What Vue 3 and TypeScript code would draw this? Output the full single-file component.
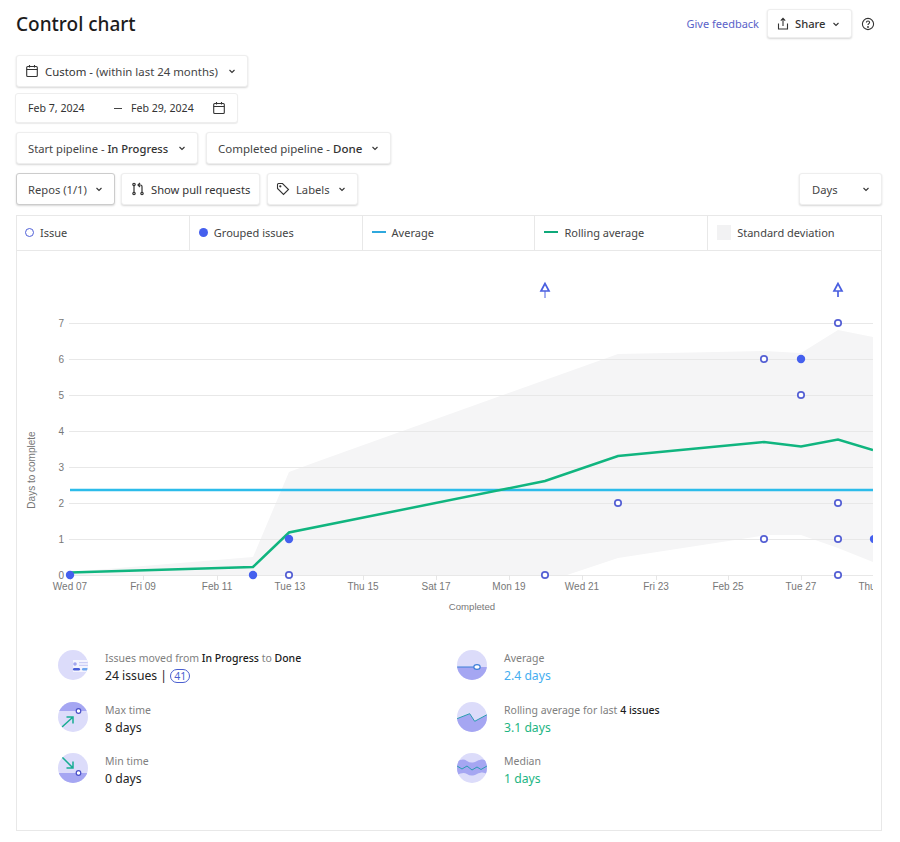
<script setup lang="ts">
const ticks = [
  { x: 70, label: "Wed 07" },
  { x: 143, label: "Fri 09" },
  { x: 217, label: "Feb 11" },
  { x: 290, label: "Tue 13" },
  { x: 363, label: "Thu 15" },
  { x: 436, label: "Sat 17" },
  { x: 509, label: "Mon 19" },
  { x: 582, label: "Wed 21" },
  { x: 656, label: "Fri 23" },
  { x: 728, label: "Feb 25" },
  { x: 801, label: "Tue 27" },
  { x: 874, label: "Thu 29" },
];

const gridY = [0, 1, 2, 3, 4, 5, 6, 7].map((v) => ({ v, y: 575 - v * 36 }));

const issues = [
  [289, 575],
  [545, 575],
  [618, 503],
  [764, 539],
  [764, 359],
  [801, 395],
  [838, 323],
  [838, 503],
  [838, 539],
  [838, 575],
];
const grouped = [
  [70, 575],
  [253, 575],
  [289, 539],
  [801, 359],
  [874, 539],
];

const rolling =
  "70,572.5 253,567 289,532.5 545,481 618,456 764,442 801,446.5 838,439.5 873,450";
const deviation =
  "70,572 253,557 289,472 316,462 618,354 764,351 801,353 838,330 873,337 873,562 838,548 801,535 767,535 618,558 567,575 253,575 70,575";
</script>

<template>
  <div class="page">
    <header class="top">
      <h1>Control chart</h1>
      <div class="top-actions">
        <a class="feedback">Give feedback</a>
        <button class="btn share">
          <svg class="ic" viewBox="0 0 14 14" fill="none" stroke="#333" stroke-width="1.1">
            <path d="M2.5 6.5v5.5h9V6.5M7 9V1.5M4.8 3.6 7 1.4l2.2 2.2" />
          </svg>
          <span class="txt">Share</span>
          <svg class="chev" viewBox="0 0 8 8"><path d="M1.5 3 4 5.5 6.5 3" /></svg>
        </button>
        <svg class="help" viewBox="0 0 14 14" fill="none" stroke="#333" stroke-width="1.1">
          <circle cx="7" cy="7" r="5.6" />
          <path d="M5.4 5.6C5.4 4.6 6.1 4 7 4s1.6.6 1.6 1.5C8.6 6.7 7 6.6 7 8" />
          <circle cx="7" cy="10" r=".4" />
        </svg>
      </div>
    </header>

    <div class="row r-custom">
      <button class="btn custom">
        <svg class="ic" viewBox="0 0 14 14" fill="none" stroke="#333" stroke-width="1.1">
          <rect x="1.7" y="2.5" width="10.6" height="10" rx="1" />
          <path d="M1.7 5.5h10.6M4.5 1v2.5M9.5 1v2.5" />
        </svg>
        <span class="txt"><span class="dark">Custom -</span> (within last 24 months)</span>
        <svg class="chev" viewBox="0 0 8 8"><path d="M1.5 3 4 5.5 6.5 3" /></svg>
      </button>
    </div>

    <div class="date">
      <span class="d1">Feb 7, 2024</span>
      <span class="dash"></span>
      <span class="d2">Feb 29, 2024</span>
      <svg class="ic" viewBox="0 0 14 14" fill="none" stroke="#333" stroke-width="1.1">
        <rect x="1.7" y="2.5" width="10.6" height="10" rx="1" />
        <path d="M1.7 5.5h10.6M4.5 1v2.5M9.5 1v2.5" />
      </svg>
    </div>

    <div class="row r-pipe">
      <button class="btn start">
        <span>Start pipeline - <b class="mid">In Progress</b></span>
        <svg class="chev" viewBox="0 0 8 8"><path d="M1.5 3 4 5.5 6.5 3" /></svg>
      </button>
      <button class="btn done">
        <span>Completed pipeline - <b class="mid">Done</b></span>
        <svg class="chev" viewBox="0 0 8 8"><path d="M1.5 3 4 5.5 6.5 3" /></svg>
      </button>
    </div>

    <div class="row r-filter">
      <button class="btn repos">
        <span>Repos (1/1)</span>
        <svg class="chev" viewBox="0 0 8 8"><path d="M1.5 3 4 5.5 6.5 3" /></svg>
      </button>
      <button class="btn prs">
        <svg class="ic" viewBox="0 0 14 14" fill="none" stroke="#333" stroke-width="1.2">
          <circle cx="3" cy="2.5" r="1.2" />
          <circle cx="3" cy="11.5" r="1.2" />
          <circle cx="11" cy="11.5" r="1.2" />
          <path d="M3 3.7v6.6M11 10.3V4.5A1.5 1.5 0 0 0 9.5 3H7.5M9 1 7 3l2 2" />
        </svg>
        <span class="txt dark">Show pull requests</span>
      </button>
      <button class="btn labels">
        <svg class="ic" viewBox="0 0 14 14" fill="none" stroke="#333" stroke-width="1.1">
          <path d="M1.5 2.5a1 1 0 0 1 1-1h4l6 6-5 5-6-6z" />
          <circle cx="4.3" cy="4.3" r=".6" />
        </svg>
        <span class="txt">Labels</span>
        <svg class="chev" viewBox="0 0 8 8"><path d="M1.5 3 4 5.5 6.5 3" /></svg>
      </button>
      <button class="btn days">
        <span>Days</span>
        <svg class="chev" viewBox="0 0 8 8"><path d="M1.5 3 4 5.5 6.5 3" /></svg>
      </button>
    </div>

    <section class="panel">
      <div class="legend">
        <div class="cell"><i class="lg-ring"></i>Issue</div>
        <div class="cell"><i class="lg-dot"></i>Grouped issues</div>
        <div class="cell"><i class="lg-line blue"></i>Average</div>
        <div class="cell"><i class="lg-line green"></i>Rolling average</div>
        <div class="cell"><i class="lg-box"></i>Standard deviation</div>
      </div>

      <svg class="chart" width="864" height="379" viewBox="17 251 864 379">
        <defs>
          <clipPath id="plot"><rect x="40" y="251" width="833" height="379" /></clipPath>
        </defs>
        <polygon :points="deviation" fill="#f5f5f6" />
        <line v-for="g in gridY" :key="g.v" x1="69" x2="873" :y1="g.y + 0.5" :y2="g.y + 0.5" stroke="#e8e8e8" />
        <text v-for="g in gridY" :key="'l' + g.v" x="64" :y="g.y + 3.5" text-anchor="end" class="axis">{{ g.v }}</text>
        <g clip-path="url(#plot)">
          <line v-for="t in ticks" :key="t.x" :x1="t.x + 0.5" :x2="t.x + 0.5" y1="575" y2="580" stroke="#e6e6e6" />
          <text v-for="t in ticks" :key="'t' + t.x" :x="t.x" y="589.5" text-anchor="middle" class="axis">{{ t.label }}</text>
          <line x1="70" x2="873" y1="490" y2="490" stroke="#2cbcea" stroke-width="2.4" />
          <polyline :points="rolling" fill="none" stroke="#10b57f" stroke-width="2.5" />
          <circle v-for="p in grouped" :key="'g' + p[0] + p[1]" :cx="p[0]" :cy="p[1]" r="4.2" fill="#4560ee" />
          <circle v-for="p in issues" :key="'i' + p[0] + p[1]" :cx="p[0]" :cy="p[1]" r="3.2" fill="#fff" stroke="#5560d4" stroke-width="1.7" />
        </g>
        <g fill="#fff" stroke="#4a5fe0" stroke-width="1.7">
          <path d="M545 283.5 541 291h8z" />
          <path d="M545 291v7" stroke-width="1" />
          <path d="M838 283.5 834 291h8z" />
          <path d="M838 291v6" />
        </g>
        <text x="35" y="470" transform="rotate(-90 35 470)" text-anchor="middle" class="axis">Days to complete</text>
        <text x="472" y="609.5" text-anchor="middle" class="axis small">Completed</text>
      </svg>

      <div class="stats">
        <div class="stat">
          <svg class="stat-ic" viewBox="0 0 30 30">
            <clipPath id="d1"><circle cx="15" cy="15" r="15" /></clipPath>
            <g clip-path="url(#d1)">
              <rect width="30" height="30" fill="#dcdcfa" />
              <rect x="15" y="10" width="15" height="12" fill="#f4f4fe" />
              <circle cx="17" cy="14" r="1.8" fill="#a3a6ee" />
              <path d="M21 12.7h9M21 15.3h9" stroke="#c3c5f3" />
              <rect x="15" y="18" width="7" height="2.6" rx="1.3" fill="#4a5fd8" />
              <rect x="24" y="18" width="6" height="2.6" rx="1.3" fill="#6fa8ef" />
            </g>
          </svg>
          <div>
            <div class="lab">Issues moved from <b>In Progress</b> to <b>Done</b></div>
            <div class="val">24 issues | <span class="pill">41</span></div>
          </div>
        </div>
        <div class="stat">
          <svg class="stat-ic" viewBox="0 0 30 30">
            <clipPath id="d2"><circle cx="15" cy="15" r="15" /></clipPath>
            <g clip-path="url(#d2)">
              <rect width="30" height="30" fill="#dcdcfa" />
              <rect y="17" width="30" height="13" fill="#a5a6f2" />
              <path d="M0 17h17" stroke="#3f7fd8" stroke-width="1.2" />
              <ellipse cx="20" cy="17" rx="3.2" ry="2.4" fill="#fff" stroke="#3f7fd8" stroke-width="1.2" />
            </g>
          </svg>
          <div>
            <div class="lab">Average</div>
            <div class="val sky">2.4 days</div>
          </div>
        </div>
        <div class="stat">
          <svg class="stat-ic" viewBox="0 0 30 30">
            <clipPath id="d3"><circle cx="15" cy="15" r="15" /></clipPath>
            <g clip-path="url(#d3)">
              <rect width="30" height="30" fill="#dcdcfa" />
              <rect width="30" height="9" fill="#a5a6f2" />
              <circle cx="20.5" cy="9" r="2.3" fill="#fff" stroke="#4a50c8" stroke-width="1.2" />
              <path d="M4 25 15 15M8.5 15H15v6.5" fill="none" stroke="#17ad92" stroke-width="1.5" />
            </g>
          </svg>
          <div>
            <div class="lab">Max time</div>
            <div class="val">8 days</div>
          </div>
        </div>
        <div class="stat">
          <svg class="stat-ic" viewBox="0 0 30 30">
            <clipPath id="d4"><circle cx="15" cy="15" r="15" /></clipPath>
            <g clip-path="url(#d4)">
              <rect width="30" height="30" fill="#dcdcfa" />
              <path d="M0 16.7 12.7 11.7 17.7 19.3 30 12.7V30H0z" fill="#a5a6f2" />
              <path d="M0 16.7 12.7 11.7 17.7 19.3 30 12.7" fill="none" stroke="#2a9db0" stroke-width="1" />
            </g>
          </svg>
          <div>
            <div class="lab">Rolling average for last <b>4 issues</b></div>
            <div class="val green">3.1 days</div>
          </div>
        </div>
        <div class="stat">
          <svg class="stat-ic" viewBox="0 0 30 30">
            <clipPath id="d5"><circle cx="15" cy="15" r="15" /></clipPath>
            <g clip-path="url(#d5)">
              <rect width="30" height="30" fill="#dcdcfa" />
              <rect y="20" width="30" height="10" fill="#a5a6f2" />
              <circle cx="20.5" cy="20" r="2.3" fill="#fff" stroke="#4a50c8" stroke-width="1.2" />
              <path d="M4 4 15 15M8.5 15H15V8.5" fill="none" stroke="#17ad92" stroke-width="1.5" />
            </g>
          </svg>
          <div>
            <div class="lab">Min time</div>
            <div class="val">0 days</div>
          </div>
        </div>
        <div class="stat">
          <svg class="stat-ic" viewBox="0 0 30 30">
            <clipPath id="d6"><circle cx="15" cy="15" r="15" /></clipPath>
            <g clip-path="url(#d6)">
              <rect width="30" height="30" fill="#dcdcfa" />
              <path d="M0 9C4 6 7 6 10 8s6 2 10 0 7-2 10 0V21c-3-2-6-2-10 0s-7 2-10 0-6-1-10 1z" fill="#a5a6f2" />
              <path d="M0 13 5 16l5-3 5 4 5-3 4 2.5 6-3.5" fill="none" stroke="#2a9db0" stroke-width="1" />
            </g>
          </svg>
          <div>
            <div class="lab">Median</div>
            <div class="val green">1 days</div>
          </div>
        </div>
      </div>
    </section>
  </div>
</template>

<style>
html,
body {
  margin: 0;
  background: #fff;
}
</style>

<style scoped>
.page {
  width: 866px;
  padding: 0 18px 0 16px;
  font-family: "Noto Sans", "Open Sans", sans-serif;
  font-size: 11px;
  color: #444;
}
.top {
  display: flex;
  align-items: center;
  justify-content: space-between;
  height: 47px;
}
h1 {
  margin: 0;
  font-size: 19px;
  font-weight: 500;
  color: #1c1c1c;
}
.top-actions {
  display: flex;
  align-items: center;
  margin-right: 7px;
}
.feedback {
  color: #5a62c8;
  margin-right: 8px;
}
.btn {
  display: inline-flex;
  align-items: center;
  height: 32px;
  padding: 0 11px;
  box-sizing: border-box;
  background: #fff;
  border: 1px solid #eee;
  border-radius: 3px;
  box-shadow: 0 1px 2px rgba(0, 0, 0, 0.16);
  font: inherit;
  font-size: 11.2px;
  color: #444;
  white-space: nowrap;
}
.txt {
  margin-left: 6px;
}
.mid {
  font-weight: 500;
  color: #333;
}
.dark {
  color: #333;
}
.ic {
  width: 14px;
  height: 14px;
  flex: none;
}
.chev {
  width: 8px;
  height: 8px;
  flex: none;
  margin-left: auto;
  fill: none;
  stroke: #333;
  stroke-width: 1.1;
}
.share {
  width: 85px;
  height: 29px;
  padding-left: 8px;
  color: #333;
  font-weight: 500;
}
.share .txt {
  margin-left: 5px;
}
.help {
  width: 14px;
  height: 14px;
  margin-left: 9px;
}
.row {
  display: flex;
}
.r-custom {
  margin-top: 8px;
}
.custom {
  width: 232px;
  padding-left: 8px;
  font-size: 11.4px;
}
.date {
  display: flex;
  align-items: center;
  width: 223px;
  height: 30px;
  box-sizing: border-box;
  margin: 6px 0 0 -1px;
  padding: 0 11px 0 12px;
  background: #fff;
  border: 1px solid #eee;
  border-radius: 3px;
  box-shadow: 0 1px 1px rgba(0, 0, 0, 0.08);
  font-size: 10.6px;
  color: #333;
}
.d1 {
  width: 86px;
}
.dash {
  width: 8px;
  height: 1px;
  background: #444;
  margin-right: 9px;
}
.d2 {
  width: 81px;
}
.r-pipe {
  margin-top: 9px;
  gap: 8px;
}
.start {
  width: 182px;
}
.done {
  width: 185px;
  font-size: 11.5px;
}
.r-filter {
  margin-top: 9px;
}
.repos {
  width: 99px;
  border-color: #ccc;
  margin-right: 6px;
}
.prs {
  width: 139px;
  margin-right: 7px;
  padding-left: 9px;
}
.labels {
  width: 91px;
  padding-left: 8px;
}
.days {
  width: 83px;
  margin-left: auto;
  padding-left: 12px;
}
.panel {
  margin-top: 10px;
  width: 866px;
  height: 616px;
  box-sizing: border-box;
  border: 1px solid #e8e8e8;
}
.legend {
  display: grid;
  grid-template-columns: repeat(5, 1fr);
  height: 34px;
  border-bottom: 1px solid #e8e8e8;
}
.cell {
  display: flex;
  align-items: center;
  padding: 0 0 2px 8px;
  border-right: 1px solid #e8e8e8;
}
.cell:last-child {
  border-right: 0;
}
.lg-ring {
  width: 7px;
  height: 7px;
  border: 1px solid #5060d8;
  border-radius: 50%;
  margin-right: 6px;
}
.lg-dot {
  width: 9px;
  height: 9px;
  background: #4560ee;
  border-radius: 50%;
  margin: 0 6px 0 1px;
}
.lg-line {
  width: 14px;
  height: 2px;
  margin: 0 6px 0 1px;
}
.blue {
  background: #2fa8dd;
}
.green {
  background: #0fa97a;
}
.lg-box {
  width: 14px;
  height: 15px;
  background: #f2f2f3;
  margin: 0 6px 0 1px;
}
.chart {
  display: block;
}
.axis {
  font-family: "Liberation Sans", Arial, sans-serif;
  font-size: 10px;
  fill: #777;
}
.small {
  font-size: 9.6px;
}
.stats {
  display: grid;
  grid-template-columns: 399px 1fr;
  grid-auto-rows: 51.5px;
  padding: 20px 0 0 41px;
}
.stat {
  display: flex;
  align-items: flex-start;
  gap: 17px;
}
.stat-ic {
  width: 30px;
  height: 30px;
  flex: none;
}
.lab {
  margin-top: 1px;
  font-size: 10.5px;
  line-height: 15px;
  color: #808080;
}
.lab b {
  font-weight: 500;
  color: #1c1c1c;
}
.val {
  margin-top: 1px;
  font-size: 12.2px;
  line-height: 18px;
  color: #222;
}
.val.sky {
  color: #45aef0;
}
.val.green {
  background: none;
  color: #1cb583;
}
.pill {
  display: inline-block;
  padding: 0 3px;
  line-height: 12px;
  font-size: 10.5px;
  color: #4a5fd0;
  border: 1px solid #4a5fd0;
  border-radius: 8px;
}
</style>
